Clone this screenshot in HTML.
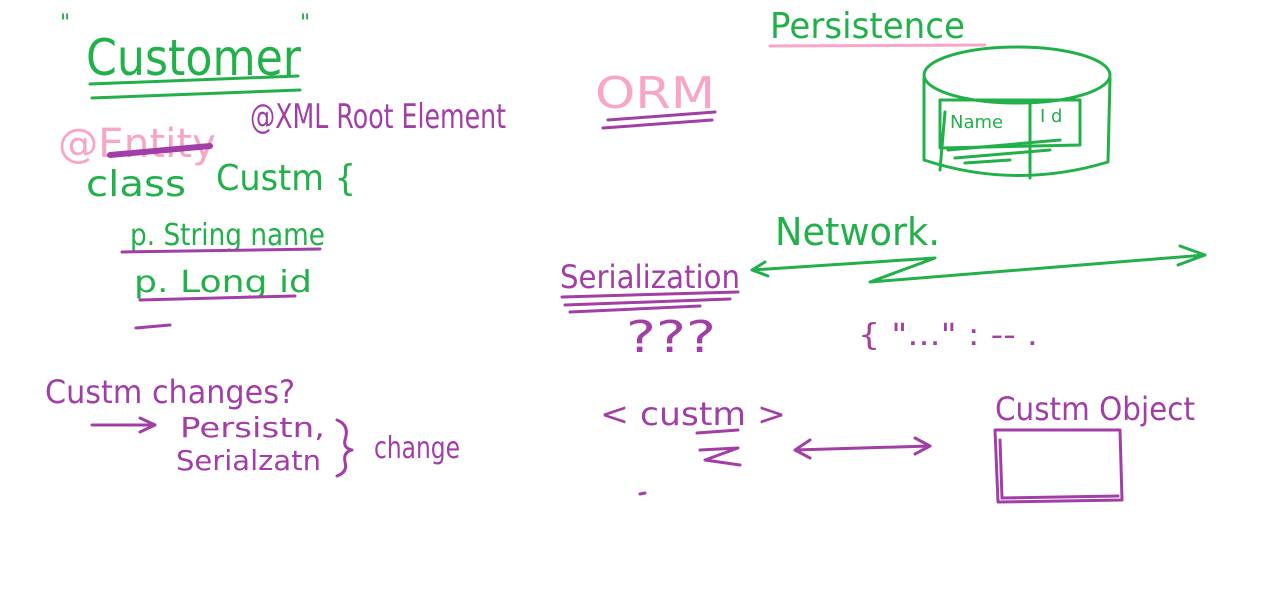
<!DOCTYPE html>
<html><head><meta charset="utf-8"><style>
html,body{margin:0;padding:0;background:#fff;}
svg{display:block}
text{font-family:"Comic Sans MS","DejaVu Sans",sans-serif;}
.g{fill:#22b04a}.p{fill:#a23fa6}.k{fill:#f7a6c8}
.sg{stroke:#22b04a;fill:none;stroke-width:3;stroke-linecap:round;stroke-linejoin:round}
.sp{stroke:#a23fa6;fill:none;stroke-width:3;stroke-linecap:round;stroke-linejoin:round}
.sk{stroke:#f7a6c8;fill:none;stroke-width:3;stroke-linecap:round}
</style></head><body>
<svg width="1268" height="590" viewBox="0 0 1268 590">
<!-- Customer -->
<text x="60" y="30" class="g" font-size="22">"</text>
<text x="300" y="30" class="g" font-size="22">"</text>
<text x="86" y="75" class="g" font-size="50" textLength="215" lengthAdjust="spacingAndGlyphs">Customer</text>
<path class="sg" d="M90 84 L298 76 M92 98 L300 90"/>
<text x="58" y="157" class="k" font-size="40" textLength="158" lengthAdjust="spacingAndGlyphs">@Entity</text>
<path d="M110 155 L210 146" stroke="#a23fa6" stroke-width="6" stroke-linecap="round"/>
<text x="250" y="128" class="p" font-size="34" textLength="256" lengthAdjust="spacingAndGlyphs">@XML Root Element</text>
<text x="86" y="196" class="g" font-size="36" textLength="100" lengthAdjust="spacingAndGlyphs">class</text>
<text x="216" y="190" class="g" font-size="36" textLength="140" lengthAdjust="spacingAndGlyphs">Custm {</text>
<text x="130" y="245" class="g" font-size="30" textLength="195" lengthAdjust="spacingAndGlyphs">p. String name</text>
<path class="sp" d="M122 252 L320 249"/>
<text x="134" y="292" class="g" font-size="30" textLength="178" lengthAdjust="spacingAndGlyphs">p. Long   id</text>
<path class="sp" d="M140 300 L295 296 M136 328 L170 325"/>
<text x="45" y="403" class="p" font-size="32" textLength="250" lengthAdjust="spacingAndGlyphs">Custm changes?</text>
<path class="sp" d="M92 425 L153 425 M140 418 L155 425 L140 432"/>
<text x="180" y="437" class="p" font-size="28" textLength="145" lengthAdjust="spacingAndGlyphs">Persistn,</text>
<text x="176" y="470" class="p" font-size="28" textLength="145" lengthAdjust="spacingAndGlyphs">Serialzatn</text>
<path class="sp" d="M337 420 Q350 425 345 440 Q343 448 352 450 Q343 452 345 462 Q348 472 337 476"/>
<text x="374" y="458" class="p" font-size="30" textLength="86" lengthAdjust="spacingAndGlyphs">change</text>
<!-- right -->
<text x="770" y="38" class="g" font-size="36" textLength="195" lengthAdjust="spacingAndGlyphs">Persistence</text>
<path class="sk" d="M770 46 L985 45"/>
<text x="595" y="108" class="k" font-size="44" textLength="120" lengthAdjust="spacingAndGlyphs">ORM</text>
<path class="sp" d="M608 120 L715 112 M603 128 L712 120"/>
<!-- cylinder -->
<ellipse cx="1017" cy="75" rx="93" ry="28" class="sg"/>
<path class="sg" d="M924 78 L924 160 Q1015 190 1108 162 L1110 78"/>
<path class="sg" d="M940 100 L1080 100 L1080 145 L940 148 Z M1030 100 L1030 178 M945 112 L940 170"/>
<text x="950" y="128" class="g" font-size="18">Name</text>
<text x="1040" y="122" class="g" font-size="18">I d</text>
<path class="sg" d="M948 150 L1060 140 M955 158 L1050 150 M965 163 L1010 160" stroke-width="2"/>
<text x="775" y="245" class="g" font-size="38" textLength="165" lengthAdjust="spacingAndGlyphs">Network.</text>
<path class="sg" d="M765 262 L752 270 L768 276 M752 270 L935 258 L870 282 L1205 255 M1180 246 L1205 255 L1178 265"/>
<text x="560" y="288" class="p" font-size="32" textLength="180" lengthAdjust="spacingAndGlyphs">Serialization</text>
<path class="sp" d="M562 297 L738 292 M565 305 L730 299 M570 312 L700 306"/>
<text x="626" y="352" class="p" font-size="44" textLength="90" lengthAdjust="spacingAndGlyphs">???</text>
<text x="858" y="345" class="p" font-size="30" textLength="180" lengthAdjust="spacingAndGlyphs">{ "..." : --  .</text>
<text x="600" y="425" class="p" font-size="32" textLength="186" lengthAdjust="spacingAndGlyphs">&lt; custm &gt;</text>
<path class="sp" d="M697 433 L738 430 M700 450 L738 448 L705 460 L740 465"/>
<path class="sp" d="M640 494 L645 493"/>
<path class="sp" d="M795 450 L930 446 M810 440 L795 450 L810 458 M915 438 L930 446 L915 454"/>
<text x="995" y="420" class="p" font-size="32" textLength="200" lengthAdjust="spacingAndGlyphs">Custm Object</text>
<path class="sp" d="M995 430 L1120 430 L1122 500 L998 502 Z M1000 440 L1002 498 L1118 496"/>
</svg>
</body></html>
